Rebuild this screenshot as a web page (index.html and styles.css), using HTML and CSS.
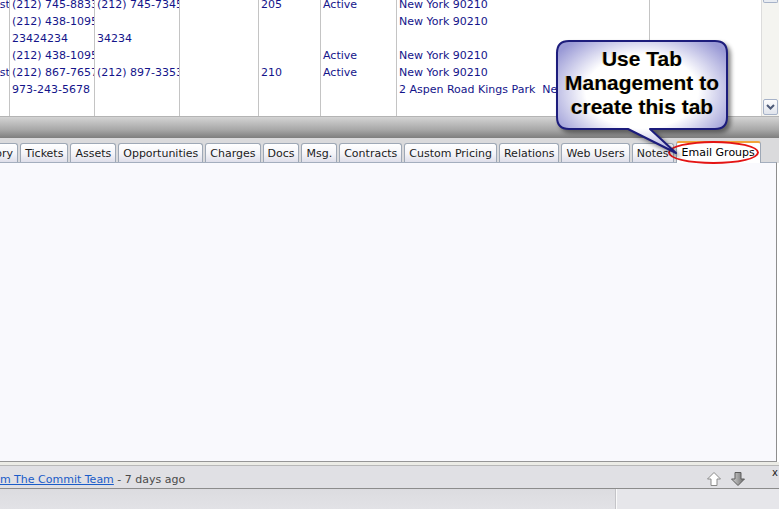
FILE: index.html
```html
<!DOCTYPE html>
<html>
<head>
    <meta charset="UTF-8">
    <title>Accounts</title>
    <link rel="stylesheet" href="styles.css">
</head>
<body>
<div class="page">
    <!-- grid (scrolled) -->
    <div class="gridWrap">
        <div class="grid">
            <div class="col c0">
                <div class="cell cut">Customer</div>
                <div class="cell"></div>
                <div class="cell"></div>
                <div class="cell"></div>
                <div class="cell cut">Customer</div>
                <div class="cell"></div>
            </div>
            <div class="col c1">
                <div class="cell">(212) 745-8833</div>
                <div class="cell">(212) 438-1095</div>
                <div class="cell">23424234</div>
                <div class="cell">(212) 438-1095</div>
                <div class="cell">(212) 867-7657</div>
                <div class="cell">973-243-5678</div>
            </div>
            <div class="col c2">
                <div class="cell">(212) 745-7345</div>
                <div class="cell"></div>
                <div class="cell">34234</div>
                <div class="cell"></div>
                <div class="cell">(212) 897-3353</div>
                <div class="cell"></div>
            </div>
            <div class="col c3"></div>
            <div class="col c4">
                <div class="cell">205</div>
                <div class="cell"></div>
                <div class="cell"></div>
                <div class="cell"></div>
                <div class="cell">210</div>
                <div class="cell"></div>
            </div>
            <div class="col c5">
                <div class="cell">Active</div>
                <div class="cell"></div>
                <div class="cell"></div>
                <div class="cell">Active</div>
                <div class="cell">Active</div>
                <div class="cell"></div>
            </div>
            <div class="col c6">
                <div class="cell">New York 90210</div>
                <div class="cell">New York 90210</div>
                <div class="cell"></div>
                <div class="cell">New York 90210</div>
                <div class="cell">New York 90210</div>
                <div class="cell">2 Aspen Road Kings Park&nbsp; New York 11754</div>
            </div>
            <div class="col c7"></div>
        </div>
        <div class="vscroll">
            <div class="sbUp"></div>
            <div class="sbDown">
                <svg width="13" height="14" viewBox="0 0 13 14"><path d="M3 5 L6.5 8.5 L10 5" fill="none" stroke="#4d5a78" stroke-width="2"/></svg>
            </div>
        </div>
    </div>

    <div class="splitter"></div>

    <!-- tabs -->
    <div class="tabStrip">
        <ul class="tabs">
            <li class="first">History</li>
            <li>Tickets</li>
            <li>Assets</li>
            <li>Opportunities</li>
            <li>Charges</li>
            <li>Docs</li>
            <li>Msg.</li>
            <li>Contracts</li>
            <li>Custom Pricing</li>
            <li>Relations</li>
            <li>Web Users</li>
            <li>Notes</li>
            <li class="sel">Email Groups</li>
        </ul>
    </div>
    <div class="content"></div>

    <div class="status">
        <div class="statusText"><a href="#">from The Commit Team</a> - 7 days ago</div>
        <div class="arrows">
            <svg width="16" height="16" viewBox="0 0 16 16"><path d="M8 1.5 L14.5 8 H11 V14.5 H5 V8 H1.5 Z" fill="#fff" stroke="#8a8a8a"/></svg>
            <svg width="16" height="16" viewBox="0 0 16 16">
                <defs><linearGradient id="dg" x1="0" x2="1"><stop offset="0" stop-color="#d8d8d8"/><stop offset="1" stop-color="#6a6a6a"/></linearGradient></defs>
                <path d="M5 1.5 H11 V8 H14.5 L8 14.5 L1.5 8 H5 Z" fill="url(#dg)" stroke="#5c5c5c"/>
            </svg>
        </div>
        <span class="close">x</span>
    </div>
    <div class="footer">
        <div class="fLeft"></div>
        <div class="fRight"></div>
    </div>

    <!-- overlays -->
    <div class="ring"></div>
    <div class="callout">
        <svg width="184" height="122" viewBox="0 0 184 122">
            <defs>
                <radialGradient id="bg" cx="0.5" cy="0.45" r="0.6">
                    <stop offset="0.55" stop-color="#ffffff"/>
                    <stop offset="1" stop-color="#9a9ad6"/>
                </radialGradient>
            </defs>
            <path d="M16 3 H162 Q174 3 174 15 V79 Q174 91 162 91 H97 L123 115 L75 91 H16 Q4 91 4 79 V15 Q4 3 16 3 Z"
                  fill="url(#bg)" stroke="#1c1c7c" stroke-width="2" stroke-linejoin="round"/>
        </svg>
        <div class="calloutText">Use Tab<br>Management to<br>create this tab</div>
    </div>
</div>
</body>
</html>
```

FILE: styles.css
```css
* {
    margin: 0;
    padding: 0;
    list-style: none;
    box-sizing: border-box;
}

body {
    font-family: "DejaVu Sans", Verdana, sans-serif;
    font-size: 11px;
    background: #fff;
}

.page {
    position: relative;
    width: 779px;
    height: 509px;
    overflow: hidden;
    display: flex;
    flex-direction: column;
}

/* grid */
.gridWrap {
    height: 117px;
    display: flex;
    background: #fff;
    border-bottom: 1px solid #b4b4b4;
}

.grid {
    flex: 1;
    display: flex;
    overflow: hidden;
}

.col {
    border-right: 1px solid #c4c4c4;
    margin-top: -4px;
    overflow: hidden;
}

.c0 { width: 10px; }
.c1 { width: 85px; }
.c2 { width: 85px; }
.c3 { width: 79px; }
.c4 { width: 62px; }
.c5 { width: 76px; }
.c6 { width: 253px; }
.c7 { flex: 1; border-right: none; }

.cell {
    height: 17px;
    line-height: 17px;
    padding-left: 2px;
    color: #14148a;
    white-space: nowrap;
    overflow: hidden;
}

.cut {
    padding-left: 0;
    text-indent: -15px;
}

.vscroll {
    width: 18px;
    border-left: 1px solid #dcdcdc;
    background: #f4f4f0;
    display: flex;
    flex-direction: column;
    justify-content: space-between;
    align-items: center;
}

.sbUp {
    width: 15px;
    height: 3px;
    border: 1px solid #a6b2c8;
    border-top: none;
    border-radius: 0 0 2px 2px;
    background: #e8ecf2;
}

.sbDown {
    width: 15px;
    height: 16px;
    margin-bottom: 1px;
    border: 1px solid #a6b2c8;
    border-radius: 2px;
    background: linear-gradient(#fcfcfd, #e0e4ec);
    display: flex;
    justify-content: center;
    align-items: center;
}

/* splitter bar */
.splitter {
    height: 21px;
    background: linear-gradient(#d4d4d4, #a8a8a8 60%, #7e7e7e);
}

/* tabs */
.tabStrip {
    height: 25px;
    background: #dadadc;
    display: flex;
    align-items: flex-end;
    overflow: hidden;
}

.tabs {
    display: flex;
    align-items: flex-end;
    margin-left: -31px;
}

.tabs li {
    height: 20px;
    line-height: 19px;
    padding: 0 4px;
    margin-right: 2px;
    border: 1px solid #9ea8b6;
    border-bottom: none;
    border-radius: 3px 3px 0 0;
    background: linear-gradient(#ffffff, #f4f4f8 50%, #dcdce8);
    color: #1c1c1c;
    white-space: nowrap;
}

.tabs li.sel {
    height: 22px;
    line-height: 20px;
    padding: 0 5px;
    border-top: 2px solid #f2a43a;
    background: #fff;
    color: #000;
    position: relative;
    z-index: 2;
}

.content {
    height: 300px;
    background: #f9f9fd;
    border-top: 1px solid #a4aebe;
    border-right: 1px solid #8e8e8e;
    border-bottom: 1px solid #969696;
    margin-top: -1px;
    margin-right: 2px;
}

/* status bar */
.status {
    height: 27px;
    padding-top: 5px;
    background: #e0e0e4;
    border-top: 3px solid #ececE6;
    box-shadow: inset 0 1px 0 #b8b8b8;
    border-bottom: 1px solid #8c8c8c;
    display: flex;
    align-items: center;
    position: relative;
}

.statusText {
    flex: 1;
    color: #4a4a4a;
    margin-left: -15px;
    white-space: nowrap;
}

.statusText a {
    color: #1a5cc8;
    text-decoration: underline;
}

.arrows {
    display: flex;
    gap: 8px;
    margin-right: 33px;
}

.close {
    position: absolute;
    right: 1px;
    top: 2px;
    font-size: 10px;
    color: #222;
}

.footer {
    flex: 1;
    display: flex;
}

.fLeft {
    width: 616px;
    background: linear-gradient(#dcdce0, #e2e2e6);
    border-right: 1px solid #c4c4c8;
}

.fRight {
    flex: 1;
    background: #e6e6ea;
    border-left: 1px solid #fafafa;
}

/* overlays */
.ring {
    position: absolute;
    left: 668px;
    top: 141px;
    width: 91px;
    height: 23px;
    border: 2px solid #e41414;
    border-radius: 50%;
    z-index: 5;
}

.callout {
    position: absolute;
    left: 553px;
    top: 38px;
    width: 184px;
    height: 122px;
    z-index: 6;
}

.callout svg {
    display: block;
    filter: drop-shadow(3px 3px 2px rgba(0, 0, 0, 0.45));
}

.calloutText {
    position: absolute;
    left: 4px;
    top: 9px;
    width: 170px;
    text-align: center;
    font-family: "Liberation Sans", Arial, sans-serif;
    font-weight: bold;
    font-size: 21px;
    line-height: 24px;
    color: #000;
    text-shadow: -1px 0 0 rgba(210, 180, 40, 0.45);
}
```
